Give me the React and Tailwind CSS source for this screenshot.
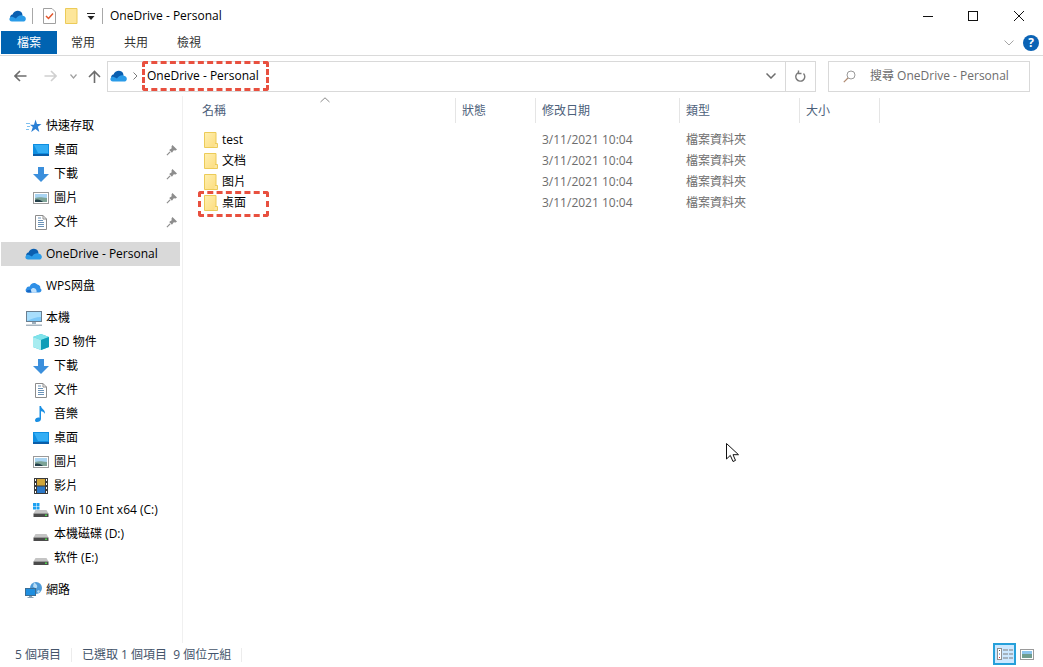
const FONT = "font-['Open_Sans','Noto_Sans_CJK_TC',sans-serif]";

function CloudIcon({ className = "" }) {
  return (
    <svg width="17" height="12" viewBox="0 0 17 12" className={className}>
      <path d="M2 9C.5 7.500 1 5 3.500 4.500 4.500 1.500 8.500-.5 11.500 1.500 13 2.500 13.500 4 13.500 5.500L8 9Z" fill="#0a5fb0" />
      <path d="M3 11.500C1 11.500 0 10 .5 8.500 1 7 2.500 6.500 4 7L7 8.500C8.500 6 11.500 4.500 14 5.800 16 6.200 17 7.800 16.800 9.200 16.600 10.600 15.500 11.500 14.200 11.500Z" fill="#2a9be8" />
    </svg>
  );
}

function WpsCloud() {
  return (
    <svg width="17" height="13" viewBox="0 0 17 13">
      <path d="M3 12.500C.8 12.500-.2 10 1.400 8.600 1.600 6.800 3.400 6 4.800 6.600 5.600 3 10 1.600 12.400 4.600 14.800 5 15.600 7 15.200 8.200 17.200 9.200 16.800 12.500 14 12.500Z" fill="#2f8fe6" />
      <path d="M6 12.500C5 10 7 7.600 9.400 8.200 11 8.600 12 10.400 11.600 12.500Z" fill="#bfe0fb" />
      <path d="M1 12C2 10 4.400 9 6 10.400L6.600 12.500H3Z" fill="#1667c4" />
    </svg>
  );
}

function FolderIcon() {
  return (
    <svg width="14" height="16" viewBox="0 0 14 16">
      <defs>
        <linearGradient id="folderFill" x1="0" y1="0" x2="1" y2="1">
          <stop offset="0" stopColor="#fff0b0" />
          <stop offset="1" stopColor="#fcdc7e" />
        </linearGradient>
      </defs>
      <path d="M.5.500h11.500v15H.5Z" fill="url(#folderFill)" stroke="#eccb58" />
      <path d="M11 11.500h2.500v4H10" fill="#fbe6a0" stroke="#eccb58" />
    </svg>
  );
}

function StarIcon() {
  return (
    <svg width="16" height="14" viewBox="0 0 16 14">
      <path d="M9.500.5 11 5h4.500l-3.600 2.800 1.400 5.200-3.900-3-4.200 3 1.600-5-2.800-2.200H8Z" fill="#2a7fd5" />
      <path d="M0 4.500h4M1 7.500h3M0 10.500h3" stroke="#7fc0ef" />
    </svg>
  );
}

function DesktopIcon() {
  return (
    <svg width="16" height="12" viewBox="0 0 16 12">
      <rect width="16" height="12" fill="#0f8ee0" />
      <path d="M1 1h14v8H5Z" fill="#34aef5" />
      <path d="M0 10h16v2H0Z" fill="#0a5da8" />
    </svg>
  );
}

function DownloadIcon() {
  return (
    <svg width="16" height="15" viewBox="0 0 16 15">
      <path d="M5 0h6v7h5l-8 8-8-8h5Z" fill="#3b8fdc" />
    </svg>
  );
}

function PictureIcon() {
  return (
    <svg width="16" height="12" viewBox="0 0 16 12">
      <rect x=".5" y=".5" width="15" height="11" fill="#fff" stroke="#9a9a9a" />
      <rect x="2" y="2" width="12" height="4" fill="#a9d4f2" />
      <path d="M2 6c3-1 6-1 12 0v4H2Z" fill="#7da396" />
      <path d="M2 8c3-1 6 0 8 2H2Z" fill="#24404a" />
    </svg>
  );
}

function DocIcon() {
  return (
    <svg width="12" height="15" viewBox="0 0 12 15">
      <path d="M.5.500h7.500l3.500 3.500v10.500H.5Z" fill="#fff" stroke="#8c8c8c" />
      <path d="M8 .5V4h3.500" fill="none" stroke="#8c8c8c" />
      <path d="M6 3H3M8 5.500H3M9 7.500H3M9 9.500H3M9 11.500H3" stroke="#6b93b8" />
    </svg>
  );
}

function PinIcon() {
  return (
    <svg width="11" height="11" viewBox="0 0 12 12">
      <path d="M7 0 12 5 10.500 6 8.500 5.800 6.500 8.500 3.500 5.500 6.200 3.500 6 1.500Z" fill="#8d8d8d" />
      <path d="M4.500 7.500 1 11" stroke="#8d8d8d" strokeWidth="1.300" />
    </svg>
  );
}

function PcIcon() {
  return (
    <svg width="16" height="15" viewBox="0 0 16 15">
      <rect x=".5" y=".5" width="15" height="10" fill="#7cc8f8" stroke="#6b7f90" />
      <path d="M1 1h14v5C10 6 5 8 1 10Z" fill="#a8defc" />
      <path d="M6 11h4v2H6Z" fill="#9fb0bd" />
      <path d="M0 13.500h16V15H0Z" fill="#a7b4bf" />
    </svg>
  );
}

function CubeIcon() {
  return (
    <svg width="16" height="16" viewBox="0 0 16 16">
      <path d="M8 0 16 3v10l-8 3-8-3V3Z" fill="#35c4d6" />
      <path d="M8 0 16 3 8 6 0 3Z" fill="#7fe3ea" />
      <path d="M8 6v10l8-3V3Z" fill="#0f9db8" />
      <path d="M0 3l8 3v10L0 13Z" fill="#a7ecf0" />
    </svg>
  );
}

function MusicIcon() {
  return (
    <svg width="12" height="16" viewBox="0 0 12 16">
      <path d="M4.500 0H6c.3 3 4.500 3.500 4 8C9.500 6.500 8 5.500 6 5.200V13c0 2-2 3-4 3-1.500 0-2-1-2-1.800C0 12.500 2.500 11 4.500 11.700Z" fill="#1a8fe3" />
    </svg>
  );
}

function FilmIcon() {
  return (
    <svg width="14" height="16" viewBox="0 0 14 16">
      <rect width="14" height="16" fill="#3a3a3a" />
      <rect x="3" y="1" width="8" height="6.500" fill="#d1a63a" />
      <rect x="3" y="8.500" width="8" height="6.500" fill="#2c78c8" />
      <path d="M1 1h1v2H1ZM1 5h1v2H1ZM1 9h1v2H1ZM1 13h1v2H1ZM12 1h1v2h-1ZM12 5h1v2h-1ZM12 9h1v2h-1ZM12 13h1v2h-1Z" fill="#fff" />
    </svg>
  );
}

function DriveIcon({ windows = false }) {
  return (
    <svg width="16" height="16" viewBox="0 0 16 16">
      {windows && <path d="M0 1h3v3H0ZM3.500 1h3v3h-3ZM0 4.500h3v3H0ZM3.500 4.500h3v3h-3Z" fill="#1da1f2" />}
      <path d="M2.500 8h11l2 3.500H.5Z" fill="#c4c4c4" />
      <path d="M.5 11.500h15V15H.5Z" fill="#4b4b4b" />
      <rect x="12" y="12.500" width="2" height="1.500" fill="#4dd04d" />
    </svg>
  );
}

function NetworkIcon() {
  return (
    <svg width="17" height="16" viewBox="0 0 17 16">
      <circle cx="11" cy="6" r="6" fill="#4f9bd8" />
      <path d="M9 .5c2 1 4 3 3 5-1 1.500-3 0-4-1ZM14 8c1 1 1 2 0 3-1 0-2-1-2-2Z" fill="#b6dcf5" />
      <rect x=".5" y="6.500" width="10" height="7" fill="#1f8fe0" stroke="#3b6d94" />
      <path d="M4 14h3v1H4ZM2.500 15h6v1h-6Z" fill="#8aa2b4" />
    </svg>
  );
}

function NavRow({ icon, label, child = false, pinned = false, active = false }) {
  return (
    <div className={`flex h-6 w-[179px] shrink-0 items-center ${child ? "pl-[32px]" : "pl-[24px]"} ${active ? "bg-[#d9d9d9]" : ""}`}>
      <span className={`flex shrink-0 items-center justify-center ${child ? "w-[16px] mr-[5px]" : "w-[17px] mr-1"}`}>{icon}</span>
      <span className="flex-1 whitespace-nowrap text-black">{label}</span>
      {pinned && <span className="mr-[3px] flex"><PinIcon /></span>}
    </div>
  );
}

const COLUMNS = [
  { label: "名稱", width: "w-[273px]", pad: "pl-[19px]" },
  { label: "狀態", width: "w-[80px]", pad: "pl-[6px]" },
  { label: "修改日期", width: "w-[144px]", pad: "pl-[6px]" },
  { label: "類型", width: "w-[120px]", pad: "pl-[6px]" },
  { label: "大小", width: "w-[80px]", pad: "pl-[6px]" },
];

const FILES = ["test", "文档", "图片", "桌面"];

export default function App() {
  return (
    <div className={`relative flex h-[667px] w-[1043px] flex-col overflow-hidden bg-white text-[12px] leading-4 text-black ${FONT}`}>
      {/* title bar */}
      <div className="flex h-[31px] shrink-0 items-center">
        <CloudIcon className="ml-[9px]" />
        <div className="ml-[6px] h-4 w-px bg-[#a8a8a8]" />
        <svg width="13" height="16" viewBox="0 0 13 16" className="ml-[10px]">
          <path d="M.5.500h8.500l3.500 3.500v11.500H.5Z" fill="#fff" stroke="#a0a0a0" />
          <path d="M3 8l2.500 2.500L10 5.500" fill="none" stroke="#e2562c" strokeWidth="1.500" />
        </svg>
        <svg width="13" height="16" viewBox="0 0 13 16" className="ml-[9px]">
          <path d="M.5.500h11.500v15H.5Z" fill="#fde69a" stroke="#eccb58" />
        </svg>
        <svg width="8" height="8" viewBox="0 0 8 8" className="ml-[9px] mt-[2px]">
          <path d="M0 0h8v1H0ZM.500 3h7L4 7Z" fill="#222" />
        </svg>
        <div className="ml-[7px] h-4 w-px bg-[#a8a8a8]" />
        <span className="ml-[7px] whitespace-nowrap">OneDrive - Personal</span>
        <div className="ml-auto flex h-full items-center">
          <svg width="10" height="10" viewBox="0 0 10 10" className="mr-[35px]"><path d="M0 5.500h10" stroke="#111" /></svg>
          <svg width="10" height="10" viewBox="0 0 10 10" className="mr-[36px]"><rect x=".5" y=".5" width="9" height="9" fill="none" stroke="#111" /></svg>
          <svg width="10" height="10" viewBox="0 0 10 10" className="mr-[19px]"><path d="M0 0l10 10M10 0 0 10" stroke="#111" /></svg>
        </div>
      </div>

      {/* ribbon tabs */}
      <div className="flex h-[25px] shrink-0 items-start border-b border-[#dadada] pl-px">
        <div className="flex h-[23px] w-[56px] items-center justify-center bg-[#0063b1] text-white">檔案</div>
        <div className="ml-[14px] flex h-[23px] w-6 items-center justify-center text-[#333]">常用</div>
        <div className="ml-[29px] flex h-[23px] w-6 items-center justify-center text-[#333]">共用</div>
        <div className="ml-[29px] flex h-[23px] w-6 items-center justify-center text-[#333]">檢視</div>
        <svg width="10" height="6" viewBox="0 0 10 6" className="ml-auto mr-[9px] mt-[9px]"><path d="M.5.500 5 5 9.500.5" fill="none" stroke="#a5a5a5" /></svg>
        <div className="mr-[4px] mt-[4px] flex h-4 w-4 items-center justify-center rounded-full bg-[#0b63b5] text-[12px] font-bold leading-none text-white">?</div>
      </div>

      {/* address row */}
      <div className="flex h-[40px] shrink-0 items-center">
        <svg width="13" height="12" viewBox="0 0 13 12" className="ml-[14px]"><path d="M12.500 6H1.500M6 1 1 6l5 5" fill="none" stroke="#6d6d6d" strokeWidth="1.600" /></svg>
        <svg width="13" height="12" viewBox="0 0 13 12" className="ml-[17px]"><path d="M.5 6h11M7 1l5 5-5 5" fill="none" stroke="#d0d0d0" strokeWidth="1.600" /></svg>
        <svg width="7" height="5" viewBox="0 0 7 5" className="ml-[13px]"><path d="M.5.500 3.500 4l3-3.500" fill="none" stroke="#a0a0a0" strokeWidth="1.200" /></svg>
        <svg width="13" height="13" viewBox="0 0 13 13" className="ml-[11px]"><path d="M6.500 13V1.500M1 7l5.500-5.500L12 7" fill="none" stroke="#6d6d6d" strokeWidth="1.600" /></svg>
        <div className="ml-[6px] flex h-[31px] w-[709px] items-center border border-[#d9d9d9]">
          <CloudIcon className="ml-[2px]" />
          <svg width="5" height="8" viewBox="0 0 5 8" className="ml-[6px]"><path d="M.5.500 4 4 .5 7.500" fill="none" stroke="#7a7a7a" /></svg>
          <span className="ml-[9px] whitespace-nowrap">OneDrive - Personal</span>
          <svg width="10" height="6" viewBox="0 0 10 6" className="ml-auto mr-[9px]"><path d="M.5.500 5 5 9.500.5" fill="none" stroke="#6d6d6d" strokeWidth="1.500" /></svg>
          <div className="flex h-full w-[30px] items-center justify-center border-l border-[#d9d9d9]">
            <svg width="11" height="12" viewBox="0 0 11 12"><path d="M8.500 3.500A4.500 4.500 0 1 1 3 2.800M3.500 .5v3h3" fill="none" stroke="#7a7a7a" strokeWidth="1.400" /></svg>
          </div>
        </div>
        <div className="ml-[12px] flex h-[31px] w-[202px] items-center border border-[#d9d9d9] text-[#6d6d6d]">
          <svg width="13" height="13" viewBox="0 0 13 13" className="ml-[14px]"><circle cx="8" cy="5" r="4" fill="none" stroke="#9a9a9a" /><path d="M5 8 .8 12.200" stroke="#b08a70" strokeWidth="1.200" /></svg>
          <span className="ml-[14px] whitespace-nowrap">搜尋 OneDrive - Personal</span>
        </div>
      </div>

      {/* main area */}
      <div className="flex min-h-0 flex-1">
        <aside className="flex w-[183px] shrink-0 flex-col border-r border-[#f0f0f0] pl-px pt-[18px]">
          <NavRow icon={<StarIcon />} label="快速存取" />
          <NavRow child pinned icon={<DesktopIcon />} label="桌面" />
          <NavRow child pinned icon={<DownloadIcon />} label="下載" />
          <NavRow child pinned icon={<PictureIcon />} label="圖片" />
          <NavRow child pinned icon={<DocIcon />} label="文件" />
          <div className="h-2 shrink-0" />
          <NavRow active icon={<CloudIcon />} label="OneDrive - Personal" />
          <div className="h-2 shrink-0" />
          <NavRow icon={<WpsCloud />} label="WPS网盘" />
          <div className="h-2 shrink-0" />
          <NavRow icon={<PcIcon />} label="本機" />
          <NavRow child icon={<CubeIcon />} label="3D 物件" />
          <NavRow child icon={<DownloadIcon />} label="下載" />
          <NavRow child icon={<DocIcon />} label="文件" />
          <NavRow child icon={<MusicIcon />} label="音樂" />
          <NavRow child icon={<DesktopIcon />} label="桌面" />
          <NavRow child icon={<PictureIcon />} label="圖片" />
          <NavRow child icon={<FilmIcon />} label="影片" />
          <NavRow child icon={<DriveIcon windows />} label="Win 10 Ent x64 (C:)" />
          <NavRow child icon={<DriveIcon />} label="本機磁碟 (D:)" />
          <NavRow child icon={<DriveIcon />} label="软件 (E:)" />
          <div className="h-2 shrink-0" />
          <NavRow icon={<NetworkIcon />} label="網路" />
        </aside>

        <main className="min-w-0 flex-1">
          <div className="relative flex pt-[2px]">
            <svg width="10" height="6" viewBox="0 0 10 6" className="absolute left-[137px] top-[1px]"><path d="M.5 5 5 .8 9.500 5" fill="none" stroke="#8a8a8a" /></svg>
            {COLUMNS.map((col) => (
              <div key={col.label} className={`flex h-[25px] shrink-0 items-center border-r border-[#e5e5e5] text-[#4c607a] ${col.width} ${col.pad}`}>
                {col.label}
              </div>
            ))}
          </div>
          <div className="pt-[6px]">
            {FILES.map((name) => (
              <div key={name} className="flex h-[21px] items-center">
                <div className="flex w-[273px] shrink-0 items-center pl-[21px]">
                  <FolderIcon />
                  <span className="ml-[4px]">{name}</span>
                </div>
                <div className="w-[80px] shrink-0" />
                <div className="w-[144px] shrink-0 pl-[6px] text-[#6d6d6d]">3/11/2021 10:04</div>
                <div className="w-[120px] shrink-0 pl-[6px] text-[#6d6d6d]">檔案資料夾</div>
              </div>
            ))}
          </div>
        </main>
      </div>

      {/* status bar */}
      <div className="flex h-[24px] shrink-0 items-center pl-[15px] text-[#44546a]">
        <span className="w-[56px] whitespace-nowrap">5 個項目</span>
        <div className="h-[14px] w-px bg-[#ececec]" />
        <span className="ml-[10px] w-[148px] whitespace-pre">已選取 1 個項目  9 個位元組</span>
        <div className="ml-[11px] h-[14px] w-px bg-[#ececec]" />
        <div className="mb-[2px] ml-auto mr-[4px] flex h-[22px] w-[23px] items-center justify-center border-2 border-[#26a0da] bg-[#cce8ff]">
          <svg width="16" height="12" viewBox="0 0 16 12">
            <rect x=".5" y=".5" width="4" height="11" fill="#fff" stroke="#8f8f8f" />
            <path d="M6 2h5M12 2h4M6 6h5M12 6h4M6 10h5M12 10h4" stroke="#7d7d7d" />
            <path d="M2 2h1v1H2Z" fill="#555" /><path d="M2 5.500h1v1H2Z" fill="#2a7fd5" /><path d="M2 9h1v1H2Z" fill="#d33" />
          </svg>
        </div>
        <div className="mb-[2px] mr-[9px] flex">
          <svg width="14" height="11" viewBox="0 0 14 11">
            <rect x=".5" y=".5" width="13" height="10" fill="#fff" stroke="#9a9a9a" />
            <rect x="2" y="2" width="10" height="3" fill="#8cc4ec" />
            <path d="M2 5h10v4H2Z" fill="#6f9c8e" />
          </svg>
        </div>
      </div>

      {/* annotations */}
      <div className="absolute left-[142px] top-[61px] h-[30px] w-[127px] rounded-[3px] border-[3px] border-dashed border-[#e8503f]" />
      <div className="absolute left-[198px] top-[191px] h-[26px] w-[71px] rounded-[3px] border-[3px] border-dashed border-[#e8503f]" />

      {/* mouse pointer */}
      <svg width="13" height="20" viewBox="0 0 13 20" className="absolute left-[726px] top-[443px]">
        <path d="M.5.500V16l3.800-3.600L7 18.500l2.500-1.100L7 11.700h5.500Z" fill="#fff" stroke="#111" />
      </svg>
    </div>
  );
}
